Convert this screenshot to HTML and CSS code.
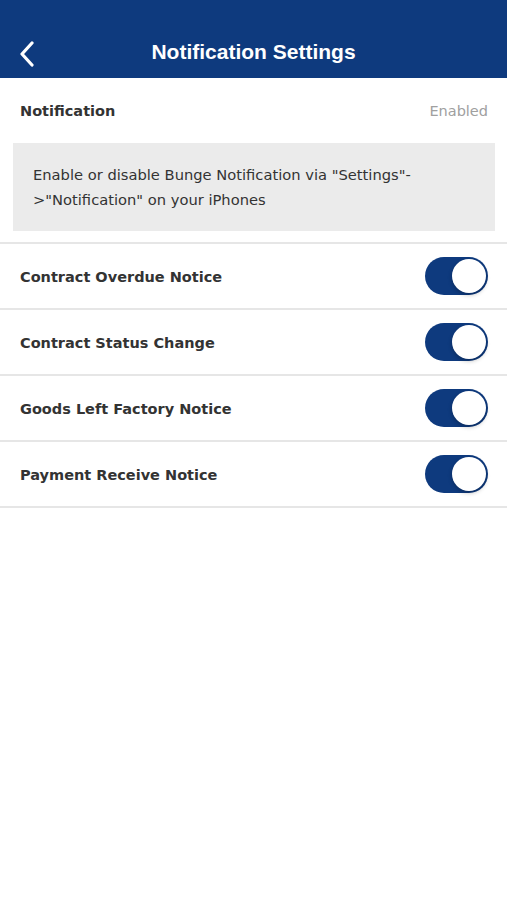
FILE: index.html
```html
<!DOCTYPE html>
<html lang="en">
<head>
    <meta charset="UTF-8">
    <meta name="viewport" content="width=device-width, initial-scale=1.0">
    <title>Notification Settings</title>
    <link rel="stylesheet" href="styles.css">
</head>
<body>
    <header class="nav-bar">
        <span class="back">
            <svg width="16" height="26" viewBox="0 0 16 26">
                <path d="M13 2 L3 13 L13 24" fill="none" stroke="#fff" stroke-width="3.2" stroke-linecap="round" stroke-linejoin="round"/>
            </svg>
        </span>
        <h1>Notification Settings</h1>
    </header>

    <div class="status-row">
        <span class="status-label">Notification</span>
        <span class="status-value">Enabled</span>
    </div>

    <div class="hint">
        Enable or disable Bunge Notification via "Settings"-&gt;"Notification" on your iPhones
    </div>

    <ul class="settings">
        <li class="setting-item">
            <span class="setting-name">Contract Overdue Notice</span>
            <span class="switch on"><span class="knob"></span></span>
        </li>
        <li class="setting-item">
            <span class="setting-name">Contract Status Change</span>
            <span class="switch on"><span class="knob"></span></span>
        </li>
        <li class="setting-item">
            <span class="setting-name">Goods Left Factory Notice</span>
            <span class="switch on"><span class="knob"></span></span>
        </li>
        <li class="setting-item">
            <span class="setting-name">Payment Receive Notice</span>
            <span class="switch on"><span class="knob"></span></span>
        </li>
    </ul>
</body>
</html>
```

FILE: styles.css
```css
body {
    margin: 0;
    background-color: #fff;
    font-family: 'DejaVu Sans', Verdana, sans-serif;
    color: #333;
}
.nav-bar {
    height: 78px;
    background-color: #0e3a7e;
    display: flex;
    align-items: flex-end;
    justify-content: center;
    position: relative;
    box-sizing: border-box;
    padding-bottom: 13px;
}
.nav-bar h1 {
    margin: 0;
    color: #fff;
    font-family: 'Liberation Sans', Arial, sans-serif;
    font-size: 21px;
    font-weight: bold;
    line-height: 26px;
}
.back {
    position: absolute;
    left: 19px;
    bottom: 11px;
    display: flex;
}
.status-row {
    display: flex;
    justify-content: space-between;
    align-items: center;
    padding: 0 19px 0 20px;
    height: 65px;
}
.status-label {
    font-weight: bold;
    font-size: 14.5px;
}
.status-value {
    font-size: 14.5px;
    color: #a0a0a0;
}
.hint {
    margin: 0 12px 0 13px;
    padding: 19px 20px 19px 20px;
    background-color: #ebebeb;
    font-size: 14.7px;
    line-height: 25px;
    color: #333;
}
.settings {
    list-style: none;
    margin: 11px 0 0 0;
    padding: 0;
    border-top: 2px solid #e6e6e6;
}
.setting-item {
    display: flex;
    justify-content: space-between;
    align-items: center;
    height: 64px;
    padding: 0 19px 0 20px;
    border-bottom: 2px solid #e6e6e6;
}
.setting-name {
    font-weight: bold;
    font-size: 14.5px;
    padding-top: 1px;
}
.switch {
    width: 63px;
    height: 38px;
    border-radius: 19px;
    background-color: #e6e6e6;
    display: flex;
    align-items: center;
    box-sizing: border-box;
    padding: 2px;
}
.switch.on {
    background-color: #0e3a7e;
    justify-content: flex-end;
}
.knob {
    width: 34px;
    height: 34px;
    border-radius: 50%;
    background-color: #fff;
    box-shadow: 0 2px 4px rgba(0,0,0,0.25);
}
```
